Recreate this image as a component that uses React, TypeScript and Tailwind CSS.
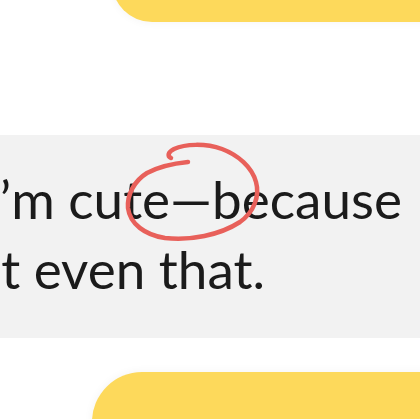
export default function App() {
  return (
    <div
      className="relative flex h-[419px] w-[420px] flex-col overflow-hidden bg-white text-[#1b1b1b]"
      style={{ fontFamily: "Lato, 'Noto Sans', sans-serif" }}
    >
      {/* incoming bubble, cut by the top edge */}
      <div className="-mt-[58px] ml-[112px] h-[80px] w-[360px] shrink-0 rounded-[48px] bg-[#fdd95b] shadow-[0_0_10px_rgba(0,0,0,0.05)]" />

      {/* quoted message */}
      <div className="mt-[113px] h-[203px] w-[440px] shrink-0 bg-[#f2f2f2] pt-[29px] text-[53px] leading-[70px]">
        <p className="-ml-[15px] whitespace-nowrap">I’m cute—because</p>
        <p className="-ml-[58px] whitespace-nowrap">not even that.</p>
      </div>

      {/* next bubble */}
      <div className="mt-[34px] ml-[92px] h-[120px] w-[380px] shrink-0 rounded-[50px] bg-[#fdd95b] pl-[77px] pt-[33px] text-[53px] leading-[70px] shadow-[0_0_10px_rgba(0,0,0,0.05)]">
        <p className="whitespace-nowrap">and what</p>
      </div>

      {/* hand-drawn red circle */}
      <svg
        className="pointer-events-none absolute left-[120px] top-[140px] h-[105px] w-[145px]"
        viewBox="120 140 145 105"
        fill="none"
      >
        <path
          d="M188 162 C178 163 160 166 147 173 C134 181 127 195 128 208 C130 224 145 235 165 238 C190 241 220 235 240 222 C254 212 260 196 256 182 C252 167 238 155 222 149 C205 143 185 144 174 149 C168 152 167 156 171 158"
          stroke="#e8605a"
          strokeWidth={4.5}
          strokeLinecap="round"
          strokeLinejoin="round"
        />
      </svg>
    </div>
  );
}
